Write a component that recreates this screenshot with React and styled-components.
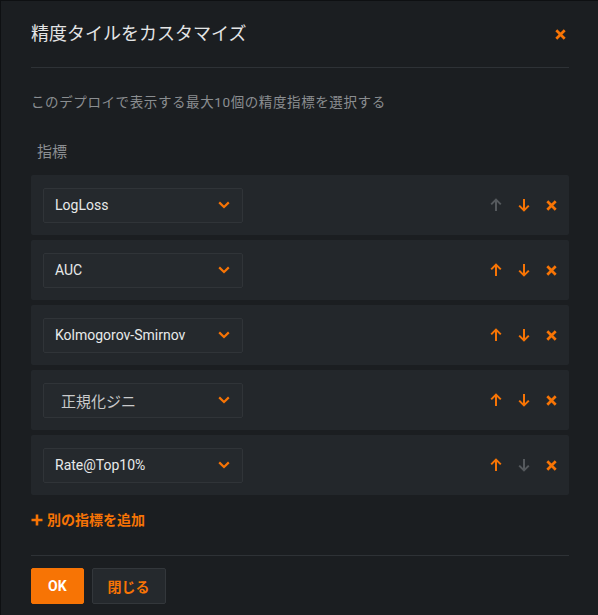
import React from "react";
import styled, { createGlobalStyle } from "styled-components";

const orange = "#f77405";
const muted = "#55595d";

const Global = createGlobalStyle`
  body {
    margin: 0;
    background: #1b1e21;
    font-family: Roboto, "Noto Sans CJK JP", sans-serif;
  }
`;

const Dialog = styled.div`
  width: 598px;
  height: 615px;
  box-sizing: border-box;
  background: #1b1e21;
  border-top: 1px solid #0e1012;
  border-left: 1px solid #0e1012;
  padding: 0 29px 0 30px;
  display: flex;
  flex-direction: column;
`;

const Header = styled.div`
  display: flex;
  align-items: center;
  justify-content: space-between;
  padding-top: 21px;
  padding-bottom: 21px;
  border-bottom: 1px solid #2e3236;
`;

const Title = styled.h1`
  margin: 0;
  font-size: 18px;
  line-height: 24px;
  font-weight: 400;
  color: #e4e5e6;
`;

const IconButton = styled.button`
  background: none;
  border: 0;
  padding: 0;
  width: ${(p) => (p.$narrow ? "11px" : "12px")};
  height: 14px;
  display: flex;
  align-items: center;
  justify-content: center;
  color: ${(p) => (p.$disabled ? muted : orange)};
  cursor: pointer;
`;

const Description = styled.p`
  margin: 24px 0 0;
  font-size: 13.5px;
  letter-spacing: 0.6px;
  line-height: 20px;
  color: #8b8e91;
`;

const Label = styled.div`
  margin: 30px 0 0 6px;
  font-size: 15px;
  line-height: 20px;
  color: #8b8e91;
`;

const List = styled.div`
  margin-top: 13px;
  display: flex;
  flex-direction: column;
  gap: 5px;
`;

const Row = styled.div`
  height: 60px;
  background: #23272b;
  border-radius: 2px;
  display: flex;
  align-items: center;
  justify-content: space-between;
  padding: 0 12px 0 12px;
`;

const Select = styled.div`
  width: 200px;
  height: 35px;
  box-sizing: border-box;
  background: #25292d;
  border: 1px solid #303438;
  border-radius: 2px;
  display: flex;
  align-items: center;
  justify-content: space-between;
  padding: 0 12px 0 ${(p) => (p.$indent ? "17px" : "11px")};
  font-size: ${(p) => (p.$indent ? "15px" : "14px")};
  color: ${(p) => (p.$indent ? "#c9cacb" : "#e8e9ea")};
`;

const Actions = styled.div`
  display: flex;
  align-items: center;
  gap: 16px;
`;

const AddLink = styled.button`
  margin-top: 15px;
  align-self: flex-start;
  background: none;
  border: 0;
  padding: 0;
  display: flex;
  align-items: center;
  gap: 4px;
  color: ${orange};
  font-family: inherit;
  font-size: 14px;
  font-weight: 700;
  line-height: 20px;
  cursor: pointer;
`;

const Footer = styled.div`
  margin-top: 25px;
  border-top: 1px solid #2e3236;
  padding-top: 12px;
  display: flex;
  gap: 8px;
`;

const Button = styled.button`
  height: 36px;
  box-sizing: border-box;
  padding: 0 ${(p) => (p.$primary ? "16px" : "15px")};
  border-radius: 2px;
  border: 1px solid ${(p) => (p.$primary ? orange : "#33373b")};
  background: ${(p) => (p.$primary ? orange : "#25292d")};
  color: ${(p) => (p.$primary ? "#ffffff" : orange)};
  font-family: inherit;
  font-size: 14px;
  font-weight: 700;
  cursor: pointer;
`;

const Cross = ({ size = 11 }) => (
  <svg width={size} height={size} viewBox="0 0 11 11">
    <path d="M1.3 1.3L9.7 9.7M9.7 1.3L1.3 9.7" stroke="currentColor" strokeWidth="2.7" fill="none" />
  </svg>
);

const Arrow = ({ down }) => (
  <svg width="12" height="14" viewBox="0 0 12 14" style={{ transform: down ? "rotate(180deg)" : "none" }}>
    <path d="M6 13V1.8M1.2 6.4L6 1.6l4.8 4.8" stroke="currentColor" strokeWidth="2" fill="none" />
  </svg>
);

const Chevron = () => (
  <svg width="12" height="8" viewBox="0 0 12 8" style={{ color: orange }}>
    <path d="M1.2 1.4L6 6l4.8-4.6" stroke="currentColor" strokeWidth="2.2" fill="none" />
  </svg>
);

const Plus = () => (
  <svg width="12" height="12" viewBox="0 0 12 12">
    <path d="M6 0.5v11M0.5 6h11" stroke="currentColor" strokeWidth="2.6" fill="none" />
  </svg>
);

const metrics = [
  { name: "LogLoss" },
  { name: "AUC" },
  { name: "Kolmogorov-Smirnov" },
  { name: "正規化ジニ", indent: true },
  { name: "Rate@Top10%" },
];

export default function App() {
  return (
    <>
      <Global />
      <Dialog>
        <Header>
          <Title>精度タイルをカスタマイズ</Title>
          <IconButton $narrow aria-label="close" style={{ marginRight: 3 }}>
            <Cross />
          </IconButton>
        </Header>
        <Description>このデプロイで表示する最大10個の精度指標を選択する</Description>
        <Label>指標</Label>
        <List>
          {metrics.map((m, i) => (
            <Row key={m.name}>
              <Select $indent={m.indent}>
                <span>{m.name}</span>
                <Chevron />
              </Select>
              <Actions>
                <IconButton $disabled={i === 0}>
                  <Arrow />
                </IconButton>
                <IconButton $disabled={i === metrics.length - 1}>
                  <Arrow down />
                </IconButton>
                <IconButton $narrow>
                  <Cross />
                </IconButton>
              </Actions>
            </Row>
          ))}
        </List>
        <AddLink>
          <Plus />
          別の指標を追加
        </AddLink>
        <Footer>
          <Button $primary>OK</Button>
          <Button>閉じる</Button>
        </Footer>
      </Dialog>
    </>
  );
}
